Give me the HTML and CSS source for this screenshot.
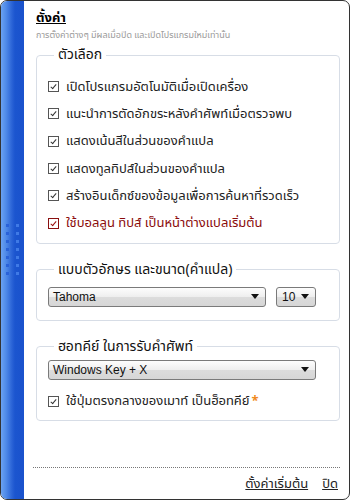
FILE: index.html
```html
<!DOCTYPE html>
<html>
  <head>
    <meta charset="utf-8" />
    <title>ตั้งค่า</title>
    <link rel="stylesheet" href="styles.css">
  </head>

  <body>
    <div class="window">
      <div class="sidebar">
        <div class="dots">
          <span></span><span></span><span></span><span></span><span></span><span></span><span></span>
          <span></span><span></span><span></span><span></span><span></span><span></span><span></span>
        </div>
      </div>

      <div class="content">
        <h1 class="title">ตั้งค่า</h1>
        <p class="subtitle">การตั้งค่าต่างๆ มีผลเมื่อปิด และเปิดโปรแกรมใหม่เท่านั้น</p>

        <fieldset class="group options">
          <legend>ตัวเลือก</legend>
          <label class="check"><span class="box"></span>เปิดโปรแกรมอัตโนมัติเมื่อเปิดเครื่อง</label>
          <label class="check"><span class="box"></span>แนะนำการตัดอักขระหลังคำศัพท์เมื่อตรวจพบ</label>
          <label class="check"><span class="box"></span>แสดงเน้นสีในส่วนของคำแปล</label>
          <label class="check"><span class="box"></span>แสดงทูลทิปส์ในส่วนของคำแปล</label>
          <label class="check"><span class="box"></span>สร้างอินเด็กซ์ของข้อมูลเพื่อการค้นหาที่รวดเร็ว</label>
          <label class="check active"><span class="box"></span>ใช้บอลลูน ทิปส์ เป็นหน้าต่างแปลเริ่มต้น</label>
        </fieldset>

        <fieldset class="group font">
          <legend>แบบตัวอักษร และขนาด(คำแปล)</legend>
          <div class="combo-row">
            <div class="combo wide">Tahoma<span class="arrow"></span></div>
            <div class="combo small">10<span class="arrow"></span></div>
          </div>
        </fieldset>

        <fieldset class="group hotkey">
          <legend>ฮอทคีย์ ในการรับคำศัพท์</legend>
          <div class="combo full">Windows Key + X<span class="arrow"></span></div>
          <label class="check"><span class="box"></span>ใช้ปุ่มตรงกลางของเมาท์ เป็นฮ็อทคีย์<span class="star">*</span></label>
        </fieldset>

        <div class="footer">
          <a class="link" href="#">ตั้งค่าเริ่มต้น</a>
          <a class="link" href="#">ปิด</a>
        </div>
      </div>
    </div>
  </body>
</html>
```

FILE: styles.css
```css
body {
  margin: 0;
  background-color: white;
  font-family: Tahoma, "Noto Sans Thai", Loma, Garuda, "DejaVu Sans", sans-serif;
  font-size: 13px;
  color: #222;
}

.window {
  box-sizing: border-box;
  width: 350px;
  height: 500px;
  border: 1px solid #333;
  border-radius: 7px;
  overflow: hidden;
  display: flex;
  background-color: white;
}

.sidebar {
  width: 23px;
  flex-shrink: 0;
  background: linear-gradient(to right, #6aa2f2 0px, #4f8ae8 5px, #2a63d6 11px, #1b55cf 14px, #1a52cc 23px);
  display: flex;
  align-items: flex-start;
}

.dots {
  margin-top: 223px;
  margin-left: 5px;
  display: grid;
  grid-template-columns: 3px 3px;
  grid-template-rows: repeat(7, 3px);
  grid-auto-flow: column;
  column-gap: 7px;
  row-gap: 5px;
}

.dots span {
  background-color: #2a62d8;
}

.dots span:nth-child(n + 8) {
  background-color: #3f7ae6;
}

.content {
  flex: 1;
  padding: 9px 9px 0 12px;
  display: flex;
  flex-direction: column;
}

.title {
  margin: 0;
  font-size: 13px;
  font-weight: bold;
  line-height: 17px;
  color: #000;
  text-decoration: underline;
  align-self: flex-start;
}

.subtitle {
  margin: 1px 0 0 0;
  font-size: 9px;
  line-height: 14px;
  color: #9a9a9a;
}

.group {
  margin: 0;
  border: 1px solid #d7dde6;
  border-radius: 4px;
  padding: 0 10px 0 11px;
}

.group legend {
  padding: 0 4px;
  margin-left: 6px;
  font-size: 14px;
  line-height: 18px;
  color: #111;
}

.options {
  margin-top: 4px;
  padding-top: 9px;
  padding-bottom: 6px;
}

.font {
  margin-top: 17px;
  padding-top: 8px;
  padding-bottom: 13px;
}

.hotkey {
  margin-top: 17px;
  padding-top: 4px;
  padding-bottom: 5px;
}

.check {
  display: flex;
  align-items: center;
  height: 27.3px;
  color: #222;
  white-space: nowrap;
}

.box {
  box-sizing: border-box;
  width: 11px;
  height: 11px;
  border: 1px solid #555;
  margin-right: 7px;
  flex-shrink: 0;
  position: relative;
  background-color: white;
}

.box::after {
  content: "";
  position: absolute;
  left: 3px;
  top: 1px;
  width: 2px;
  height: 5px;
  border-right: 1.5px solid #333;
  border-bottom: 1.5px solid #333;
  transform: rotate(40deg);
}

.active {
  color: #8a0a0a;
}

.active .box {
  border-color: #8a1010;
}

.active .box::after {
  border-color: #9a0c0c;
}

.star {
  color: #f08a1c;
  font-weight: bold;
  margin-left: 2px;
}

.combo-row {
  display: flex;
  gap: 10px;
}

.combo {
  box-sizing: border-box;
  height: 20px;
  border: 1px solid #7a7a7a;
  border-radius: 3px;
  background: linear-gradient(to bottom, #fdfdfd 0%, #eeeeee 50%, #dcdcdc 51%, #d6d6d6 100%);
  display: flex;
  align-items: center;
  padding: 0 6px 0 4px;
  font-family: "Liberation Sans", Arial, sans-serif;
  font-size: 12px;
  font-weight: normal;
  color: #111;
}

.combo .arrow {
  margin-left: auto;
  width: 0;
  height: 0;
  border-left: 4px solid transparent;
  border-right: 4px solid transparent;
  border-top: 5px solid #111;
}

.wide {
  width: 218px;
}

.small {
  width: 40px;
  padding-left: 5px;
}

.full {
  width: 268px;
}

.hotkey .check {
  margin-top: 8px;
  height: 27px;
}

.footer {
  margin-top: auto;
  margin-left: -3px;
  border-top: 1px dotted #777;
  height: 31px;
  display: flex;
  justify-content: flex-end;
  align-items: center;
  gap: 14px;
  padding-right: 2px;
}

.link {
  color: #222;
  text-decoration: underline;
  font-size: 13px;
}
```
